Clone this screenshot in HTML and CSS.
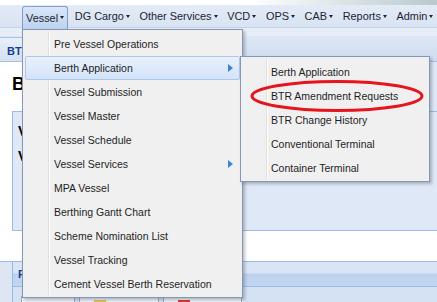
FILE: index.html
```html
<!DOCTYPE html>
<html lang="en">
<head>
  <meta charset="UTF-8" />
  <title>Berth Application</title>
  <link rel="stylesheet" href="styles.css">
</head>
<body>
  <div class="app">
    <div class="topstrip"></div>
    <nav class="menubar">
      <span class="menu-item open">Vessel<i class="caret"></i></span>
      <span class="menu-item">DG Cargo<i class="caret"></i></span>
      <span class="menu-item">Other Services<i class="caret"></i></span>
      <span class="menu-item">VCD<i class="caret"></i></span>
      <span class="menu-item">OPS<i class="caret"></i></span>
      <span class="menu-item">CAB<i class="caret"></i></span>
      <span class="menu-item">Reports<i class="caret"></i></span>
      <span class="menu-item">Admin<i class="caret"></i></span>
    </nav>
    <div class="subbar"></div>
    <div class="tabstrip"><span class="tab">BTR Amendment</span></div>

    <div class="content">
      <div class="head-row">
        <h2 class="page-title">Berth Application</h2>
        <div class="head-fill"></div>
      </div>
      <div class="fieldset">
        <div class="field-label">Vessel Name</div>
        <div class="field-label">Voyage No</div>
      </div>
      <div class="gap-row"></div>
      <div class="panel-row">
        <div class="panel">
          <div class="panel-head">Port Details</div>
          <div class="toolbar">
            <button class="btn">View</button>
            <button class="btn"><i class="ico ico-edit"></i>Update</button>
            <button class="btn"><i class="ico ico-cancel"></i>Cancel</button>
          </div>
        </div>
      </div>
    </div>

    <ul class="dropdown">
      <li>Pre Vessel Operations</li>
      <li class="active has-sub">Berth Application</li>
      <li>Vessel Submission</li>
      <li>Vessel Master</li>
      <li>Vessel Schedule</li>
      <li class="has-sub">Vessel Services</li>
      <li>MPA Vessel</li>
      <li>Berthing Gantt Chart</li>
      <li>Scheme Nomination List</li>
      <li>Vessel Tracking</li>
      <li>Cement Vessel Berth Reservation</li>
    </ul>

    <ul class="dropdown submenu">
      <li>Berth Application</li>
      <li>BTR Amendment Requests</li>
      <li>BTR Change History</li>
      <li>Conventional Terminal</li>
      <li>Container Terminal</li>
    </ul>

    <svg class="mark" width="180" height="36" viewBox="0 0 180 36">
      <ellipse cx="87" cy="17" rx="85" ry="14.5" fill="none" stroke="#e8141c" stroke-width="3"/>
    </svg>
  </div>
</body>
</html>
```

FILE: styles.css
```css
* { box-sizing: border-box; }
html, body { margin: 0; padding: 0; }
body {
  font-family: "Liberation Sans", Arial, sans-serif;
  background: #ffffff;
  width: 437px;
  height: 302px;
  overflow: hidden;
}
.app {
  position: relative;
  height: 302px;
}
.topstrip {
  height: 5px;
  background: linear-gradient(to right, #ffffff 0, #ffffff 250px, #b9c9cf 437px);
}
.menubar {
  height: 23px;
  display: flex;
  align-items: center;
  padding-left: 22px;
  background: linear-gradient(#e3ebf6, #d8e3f2);
  border-bottom: 1px solid #c3d3ea;
  white-space: nowrap;
}
.menu-item {
  display: flex;
  align-items: center;
  height: 22px;
  padding: 0 3px 0 4px;
  font-size: 10.9px;
  color: #1c2433;
}
.menu-item + .menu-item { margin-left: 2.7px; }
.menu-item.open {
  height: 23px;
  margin-top: 2px;
  background: linear-gradient(#dce7f6, #bcd2f0);
  border: 1px solid #7f9fcd;
  border-bottom: none;
  border-radius: 3px 3px 0 0;
  padding: 0 3px 0 3px;
}
.caret {
  display: inline-block;
  margin-left: 2px;
  border-left: 2.5px solid transparent;
  border-right: 2.5px solid transparent;
  border-top: 3px solid #1c2433;
}
.subbar {
  height: 8px;
  background: #e8eef7;
}
.tabstrip {
  height: 26px;
  background: linear-gradient(#dde7f5, #cfdcf0);
  border-bottom: 1px solid #a8c0e2;
  display: flex;
  align-items: flex-end;
}
.tab {
  height: 24px;
  padding: 7px 7px 0;
  font-size: 11px;
  font-weight: bold;
  color: #15428b;
  background: linear-gradient(#e9f0fa, #d3e1f4);
  border: 1px solid #a8c0e2;
  border-bottom: none;
  border-left: none;
}
.head-row {
  display: flex;
  height: 49px;
}
.page-title {
  margin: 0;
  padding: 12px 0 0 12px;
  width: 200px;
  font-size: 18px;
  font-weight: bold;
  color: #000;
  background: #fff;
}
.head-fill {
  flex: 1;
  background: #dfe8f6;
}
.fieldset {
  margin-left: 12px;
  height: 120px;
  background: #dfe8f6;
  border: 1px solid #99bbe8;
  border-right: none;
  padding: 11px 0 0 5px;
}
.field-label {
  font-size: 14px;
  font-weight: bold;
  color: #000;
  height: 25px;
}
.gap-row {
  height: 31px;
  background: #fff;
  border-bottom: 1px solid #99bbe8;
}
.panel-row {
  background: #dde6f2;
  padding-left: 12px;
  height: 40px;
}
.panel {
  border-left: 1px solid #99bbe8;
  height: 40px;
}
.panel-head {
  height: 25px;
  padding: 6px 0 0 5px;
  font-size: 11px;
  font-weight: bold;
  color: #15428b;
  background: linear-gradient(#d9e5f4 0, #d9e5f4 45%, #bdd1ee 50%, #c3d6f0 100%);
  border-bottom: 1px solid #99bbe8;
}
.toolbar {
  display: flex;
  gap: 4px;
  padding: 9px 0 0 8px;
  height: 15px;
  background: #d4e2f4;
  overflow: hidden;
}
.btn {
  display: flex;
  align-items: center;
  gap: 3px;
  height: 20px;
  padding: 0 14px;
  font-family: inherit;
  font-size: 11px;
  color: #000;
  background: #eef3fa;
  border: 1px solid #98a9c4;
}
.ico {
  width: 12px;
  height: 12px;
  display: inline-block;
}
.ico-edit { background: #e7c15a; }
.ico-cancel { background: #d33a2f; }

.dropdown {
  position: absolute;
  left: 22px;
  top: 29px;
  width: 221px;
  margin: 0;
  padding: 2px 2px 1px;
  list-style: none;
  background: #f0f0f0;
  border: 1px solid #8796b3;
  box-shadow: 2px 2px 3px rgba(60, 70, 90, 0.35);
  z-index: 5;
}
.dropdown::before {
  content: "";
  position: absolute;
  top: 2px;
  bottom: 2px;
  left: 25px;
  width: 1px;
  background: #e0e0e0;
  border-right: 1px solid #ffffff;
}
.dropdown li {
  position: relative;
  height: 24px;
  line-height: 22px;
  padding-left: 28px;
  font-size: 10.5px;
  color: #1e1e1e;
  border: 1px solid transparent;
}
.dropdown li.active {
  background: linear-gradient(#e9f1fc, #d3e3f8);
  border-color: #aac7ee;
  border-radius: 2px;
}
.dropdown li.has-sub::after {
  content: "";
  position: absolute;
  right: 6px;
  top: 7px;
  border-top: 4.5px solid transparent;
  border-bottom: 4.5px solid transparent;
  border-left: 5px solid #3f82d8;
}
.submenu {
  left: 240px;
  top: 56px;
  width: 190px;
  padding: 3px 2px 1px;
  z-index: 6;
}
.submenu li { padding-left: 27px; }

.mark {
  position: absolute;
  left: 250px;
  top: 79px;
  z-index: 7;
}
```
